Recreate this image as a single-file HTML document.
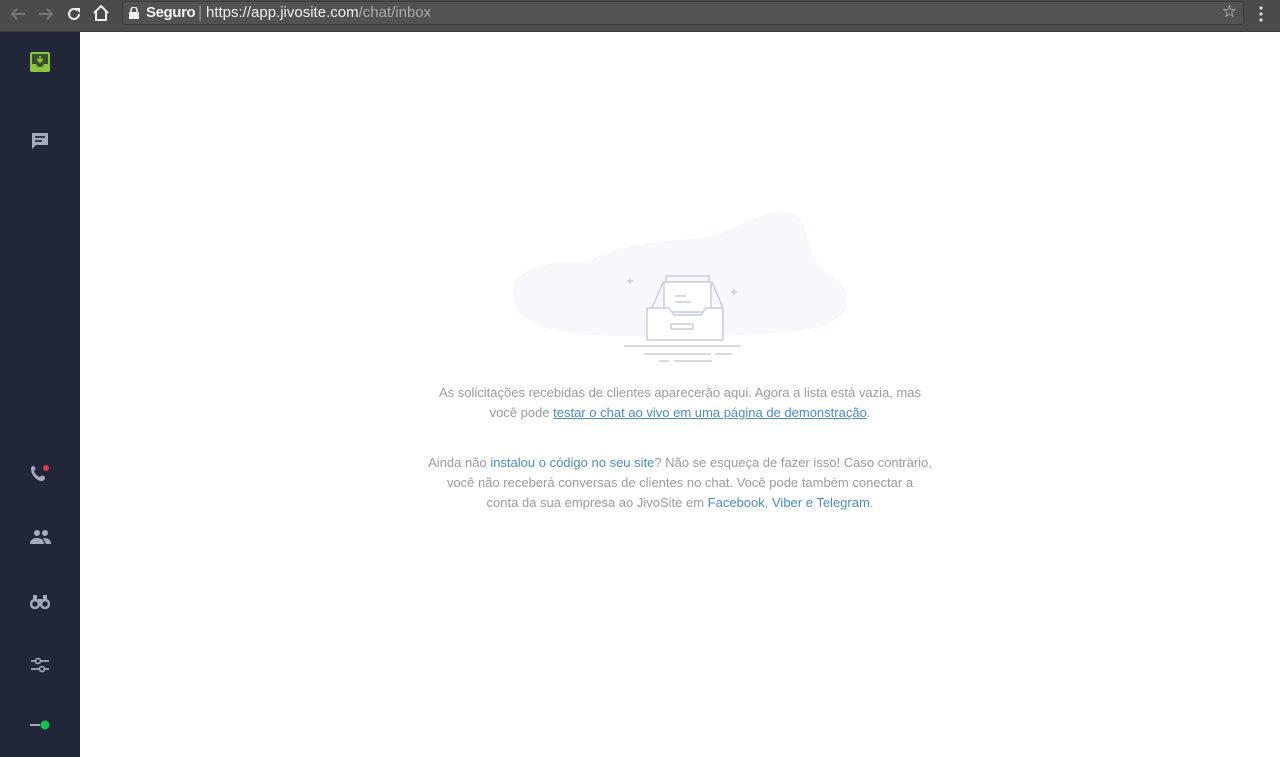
<!DOCTYPE html>
<html><head><meta charset="utf-8"><style>
*{margin:0;padding:0;box-sizing:border-box}
body{width:1280px;height:757px;overflow:hidden;background:#fff;font-family:"Liberation Sans",sans-serif;position:relative}
.bar{position:absolute;left:0;top:0;width:1280px;height:32px;background:#4b4b4b;border-bottom:1px solid #3e3e3e}
.url{position:absolute;left:122px;top:1px;width:1122px;height:24px;background:#525252;border:1px solid #3a3a3a;border-radius:3px;color:#eee;font-size:16px;line-height:22px}
.side{position:absolute;left:0;top:32px;width:80px;height:725px;background:#212638}
.ic{position:absolute;left:30px}
.txt{position:absolute;left:80px;width:1200px;text-align:center;font-size:13px;color:#9b9b9b;line-height:20px}
.txt a{color:#4a8cc7;text-decoration:none}
</style></head><body>
<div class="bar">
<svg style="position:absolute;left:8px;top:6px" width="20" height="16" viewBox="0 0 20 16"><path d="M17 8H4M9 3L4 8l5 5" stroke="#777" stroke-width="2" fill="none"/></svg>
<svg style="position:absolute;left:36px;top:6px" width="20" height="16" viewBox="0 0 20 16"><path d="M3 8h13M11 3l5 5-5 5" stroke="#777" stroke-width="2" fill="none"/></svg>
<svg style="position:absolute;left:65px;top:5px" width="18" height="18" viewBox="0 0 18 18"><path d="M14 9a5 5 0 1 1-1.5-3.6" stroke="#eee" stroke-width="2" fill="none"/><path d="M10 3h5v5z" fill="#eee"/></svg>
<svg style="position:absolute;left:92px;top:4px" width="18" height="18" viewBox="0 0 18 18"><path d="M2 9L9 2l7 7M4 7v9h10V7" stroke="#eee" stroke-width="2" fill="none"/></svg>
<div class="url"><svg style="position:absolute;left:6px;top:5px" width="10" height="12" viewBox="0 0 10 12"><rect x="0" y="5" width="10" height="7" fill="#eee"/><path d="M2 5V3a3 3 0 0 1 6 0v2" stroke="#eee" stroke-width="1.6" fill="none"/></svg><span style="position:absolute;left:23px;top:0;font-weight:bold;font-size:15px;color:#f2f2f2;letter-spacing:-0.4px">Seguro</span><span style="position:absolute;left:75px;top:0;color:#999">|</span><span style="position:absolute;left:83px;top:0;font-size:15px"><span style="color:#eee">https://app.jivosite.com</span><span style="color:#aaa">/chat/inbox</span></span>
<span style="position:absolute;right:6px;top:-1px;color:#ddd;font-size:17px">☆</span></div>
<svg style="position:absolute;left:1259px;top:6px" width="4" height="16"><circle cx="2" cy="2" r="1.6" fill="#ddd"/><circle cx="2" cy="8" r="1.6" fill="#ddd"/><circle cx="2" cy="14" r="1.6" fill="#ddd"/></svg>
</div>
<div class="side">
<svg class="ic" style="top:20px" width="20" height="20" viewBox="0 0 20 20"><rect width="20" height="20" rx="2" fill="#8bc53f"/><path d="M2 2h16v10h-4l-2 3H8l-2-3H2z" fill="#2a3a2a" opacity=".85"/><path d="M10 4v6M7 7l3 3 3-3" stroke="#8bc53f" stroke-width="1.8" fill="none"/></svg>
<svg class="ic" style="top:99px" width="20" height="20" viewBox="0 0 20 20"><path d="M2 2h16v12H6l-4 4z" fill="#a4a9bb"/><path d="M5 6h10M5 10h7" stroke="#212638" stroke-width="1.8"/></svg>
<svg class="ic" style="top:432px" width="22" height="20" viewBox="0 0 22 20"><path d="M3 2c2 0 3 3 2 4l-1 1c1 3 3 5 6 6l1-1c1-1 4 0 4 2s-2 3-3 3C6 17 1 10 1 5c0-2 1-3 2-3z" fill="#a4a9bb"/><circle cx="16" cy="4" r="3" fill="#e8323c"/></svg>
<svg class="ic" style="top:497px" width="22" height="16" viewBox="0 0 22 16"><circle cx="7" cy="4" r="3" fill="#a4a9bb"/><circle cx="15" cy="4" r="3" fill="#a4a9bb"/><path d="M0 15c0-5 4-6 7-6s7 1 7 6zM13 9c4 0 8 1 8 6h-5" fill="#a4a9bb"/></svg>
<svg class="ic" style="top:561px" width="20" height="16" viewBox="0 0 20 16"><circle cx="5" cy="11" r="4" stroke="#a4a9bb" stroke-width="2.5" fill="none"/><circle cx="15" cy="11" r="4" stroke="#a4a9bb" stroke-width="2.5" fill="none"/><path d="M3 2h4v6H3zM13 2h4v6h-4zM8 6h4v4H8z" fill="#a4a9bb"/></svg>
<svg class="ic" style="top:625px" width="20" height="16" viewBox="0 0 20 16"><path d="M1 4h18M1 12h18" stroke="#a4a9bb" stroke-width="1.8"/><circle cx="8" cy="4" r="2.5" fill="#212638" stroke="#a4a9bb" stroke-width="1.6"/><circle cx="12" cy="12" r="2.5" fill="#212638" stroke="#a4a9bb" stroke-width="1.6"/></svg>
<svg class="ic" style="top:687px" width="22" height="12" viewBox="0 0 22 12"><rect x="0" y="5" width="10" height="2" fill="#a4a9bb"/><circle cx="15" cy="6" r="4.5" fill="#13c24c"/></svg>
</div>
<svg style="position:absolute;left:505px;top:205px" width="345" height="165" viewBox="0 0 345 165">
<path d="M8 85c3-22 35-30 75-28 35-22 85-20 115-25 40-6 60-30 85-25 25 6 15 45 40 62 25 15 25 38 0 50-35 14-140 12-200 12-60 0-120-6-115-46z" fill="#f6f8fc"/>
<g stroke="#c9cbe0" stroke-width="1.5" fill="none">
<path d="M125 73v6M122 76h6M229 84v6M226 87h6"/>
<rect x="161" y="71" width="43" height="6"/>
<path d="M159 77h47v30H159z" fill="#fff"/>
<path d="M170 91h11M170 97h16"/>
<path d="M158 77l-11 26M207 77l11 26"/>
<path d="M142 103h22l5 7h27l5-7h17v32H142z" fill="#fff"/>
<rect x="166" y="119" width="22" height="5" rx="1"/>
<path d="M119 141h117M139 149h67M210 149h17M154 156h10M169 156h38"/>
</g></svg>
<div class="txt" style="top:383px">As solicitações recebidas de clientes aparecerão aqui. Agora a lista está vazia, mas<br>você pode <a style="text-decoration:underline" href="#">testar o chat ao vivo em uma página de demonstração</a>.</div>
<div class="txt" style="top:453px">Ainda não <a href="#">instalou o código no seu site</a>? Não se esqueça de fazer isso! Caso contrário,<br>você não receberá conversas de clientes no chat. Você pode também conectar a<br>conta da sua empresa ao JivoSite em <a href="#">Facebook</a>, <a href="#">Viber e Telegram</a>.</div>
</body></html>
